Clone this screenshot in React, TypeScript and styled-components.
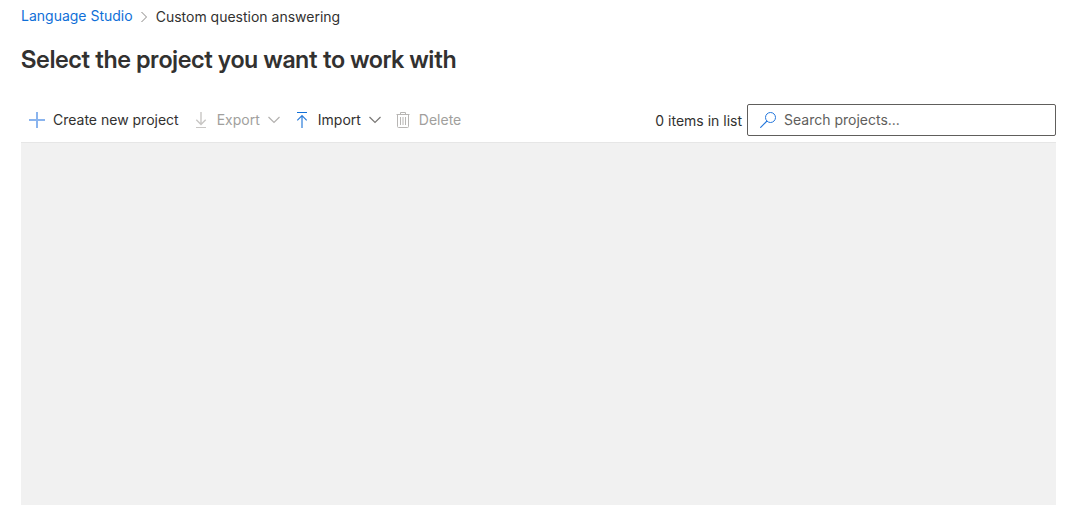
import React from "react";
import styled, { createGlobalStyle } from "styled-components";

const GlobalStyle = createGlobalStyle`
  *, *::before, *::after { box-sizing: border-box; }
  body {
    margin: 0;
    background: #ffffff;
    color: #323130;
    font-family: Inter, "Liberation Sans", sans-serif;
    font-size: 14px;
    line-height: 20px;
  }
`;

const Page = styled.div`
  display: flex;
  flex-direction: column;
  min-height: 100vh;
  padding: 0 18px 0 21px;
`;

const Breadcrumb = styled.nav`
  padding-top: 6px;

  ol {
    display: flex;
    align-items: flex-start;
    margin: 0;
    padding: 0;
    list-style: none;
  }

  li {
    display: flex;
    align-items: center;
  }

  li[aria-current] {
    padding-top: 1px;
  }

  svg {
    margin: 1px 8px 0 7px;
  }
`;

const CrumbLink = styled.a`
  color: #0f6fd8;
  text-decoration: none;

  &:hover { text-decoration: underline; }
`;

const Title = styled.h1`
  margin: 17px 0 22px;
  font-family: "Inter Display", Inter, "Liberation Sans", sans-serif;
  font-size: 24px;
  font-weight: 600;
  line-height: 32px;
`;

const Toolbar = styled.header`
  display: flex;
  align-items: center;
  justify-content: space-between;
  height: 44px;
`;

const Commands = styled.div`
  display: flex;
  align-items: center;
  gap: 6px;
`;

const CommandButton = styled.button`
  display: flex;
  align-items: center;
  gap: 8px;
  height: 40px;
  padding: 0 0 0 8px;
  border: 0;
  background: transparent;
  color: #323130;
  font: inherit;
  cursor: pointer;

  &:disabled {
    color: #a19f9d;
    cursor: default;
  }
`;

const Icon = styled.svg`
  display: block;
  flex: none;
  fill: none;
`;

const SearchArea = styled.div`
  display: flex;
  align-items: center;
  gap: 5px;
`;

const ItemCount = styled.span`
  padding-top: 2px;
`;

const SearchBox = styled.label`
  display: flex;
  align-items: center;
  gap: 8px;
  width: 309px;
  height: 32px;
  padding: 0 8px 0 12px;
  border: 1px solid #605e5c;
  border-radius: 2px;
`;

const SearchInput = styled.input`
  flex: 1;
  min-width: 0;
  padding: 0;
  border: 0;
  outline: 0;
  background: transparent;
  color: #323130;
  font: inherit;

  &::placeholder {
    color: #605e5c;
    opacity: 1;
  }
`;

const ProjectList = styled.main`
  flex: 1;
  border-top: 1px solid #e6e6e6;
  background: #f1f1f1;
`;

const ChevronRight = () => (
  <Icon width="8" height="12" viewBox="0 0 8 12" stroke="#8a8886" aria-hidden="true">
    <path d="M1.5 1L6.5 6L1.5 11" />
  </Icon>
);

const ChevronDown = ({ color }: { color: string }) => (
  <Icon width="12" height="16" viewBox="0 0 12 16" stroke={color} aria-hidden="true">
    <path d="M0.5 5L6 10.5L11.5 5" strokeWidth="1.2" />
  </Icon>
);

const PlusIcon = () => (
  <Icon width="16" height="16" viewBox="0 0 16 16" stroke="#8ab4ee" strokeWidth="2" aria-hidden="true">
    <path d="M8 0V16M0 8H16" />
  </Icon>
);

const ExportIcon = () => (
  <Icon width="16" height="16" viewBox="0 0 16 16" stroke="#c8c6c4" aria-hidden="true">
    <path d="M8 0V12M3.3 7.7L8 12.4L12.7 7.7" strokeWidth="1.4" />
    <path d="M3 15.5H13" />
  </Icon>
);

const ImportIcon = () => (
  <Icon width="16" height="16" viewBox="0 0 16 16" stroke="#2b7cd9" aria-hidden="true">
    <path d="M3 0.5H13" stroke="#0f6fd8" />
    <path d="M8 3.5V16M3.3 8.3L8 3.6L12.7 8.3" strokeWidth="1.2" />
  </Icon>
);

const TrashIcon = () => (
  <Icon width="16" height="16" viewBox="0 0 16 16" stroke="#b8b6b4" aria-hidden="true">
    <path d="M1.5 2.5H14.5M5.5 2.5V0.5H10.5V2.5M2.5 2.5V14.5Q2.5 15.5 3.5 15.5H12.5Q13.5 15.5 13.5 14.5V2.5M5.5 5V13M8 5V13M10.5 5V13" />
  </Icon>
);

const SearchIcon = () => (
  <Icon width="16" height="16" viewBox="0 0 16 16" stroke="#2477dc" aria-hidden="true">
    <circle cx="10.5" cy="5.5" r="5" />
    <path d="M7 9L0.3 15.7" strokeWidth="1.2" />
  </Icon>
);

export default function App() {
  return (
    <>
      <GlobalStyle />
      <Page>
        <Breadcrumb aria-label="Breadcrumb">
          <ol>
            <li>
              <CrumbLink href="#">Language Studio</CrumbLink>
              <ChevronRight />
            </li>
            <li aria-current="page">Custom question answering</li>
          </ol>
        </Breadcrumb>
        <Title>Select the project you want to work with</Title>
        <Toolbar>
          <Commands role="toolbar" aria-label="Project actions">
            <CommandButton type="button">
              <PlusIcon />
              Create new project
            </CommandButton>
            <CommandButton type="button" disabled>
              <ExportIcon />
              Export
              <ChevronDown color="#b3b1af" />
            </CommandButton>
            <CommandButton type="button">
              <ImportIcon />
              Import
              <ChevronDown color="#797775" />
            </CommandButton>
            <CommandButton type="button" disabled>
              <TrashIcon />
              Delete
            </CommandButton>
          </Commands>
          <SearchArea>
            <ItemCount>0 items in list</ItemCount>
            <SearchBox>
              <SearchIcon />
              <SearchInput type="search" placeholder="Search projects..." aria-label="Search projects" />
            </SearchBox>
          </SearchArea>
        </Toolbar>
        <ProjectList aria-label="Projects" />
      </Page>
    </>
  );
}
